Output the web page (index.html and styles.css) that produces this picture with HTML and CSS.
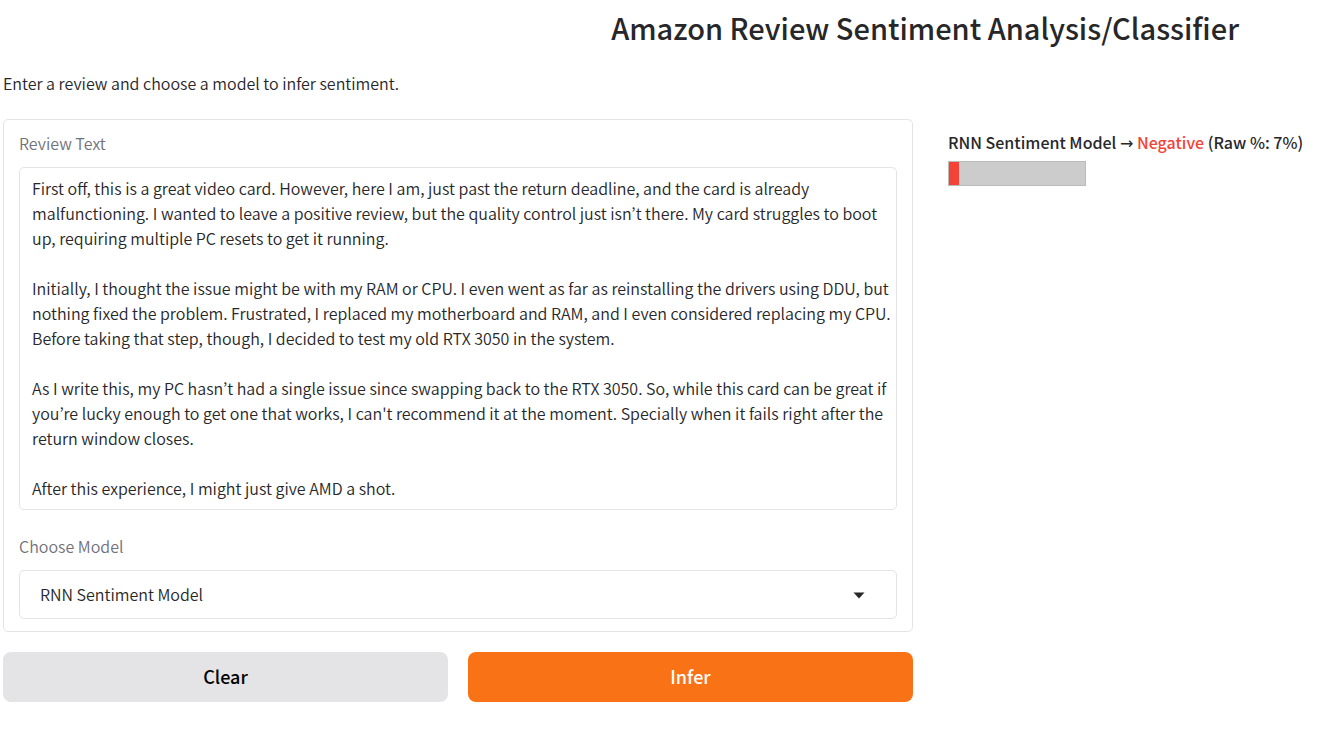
FILE: index.html
```html
<!DOCTYPE html>
<html lang="en">
<head>
<meta charset="utf-8">
<meta name="viewport" content="width=device-width, initial-scale=1">
<title>Amazon Review Sentiment Analysis/Classifier</title>
<link rel="stylesheet" href="styles.css">
</head>
<body>
<main class="app">
  <h1 class="title">Amazon Review Sentiment Analysis/Classifier</h1>
  <p class="intro">Enter a review and choose a model to infer sentiment.</p>
  <div class="columns">
    <form class="form">
      <div class="panel">
        <label class="label" for="review">Review Text</label>
        <textarea class="field review" id="review" rows="13" spellcheck="false">First off, this is a great video card. However, here I am, just past the return deadline, and the card is already malfunctioning. I wanted to leave a positive review, but the quality control just isn’t there. My card struggles to boot up, requiring multiple PC resets to get it running.

Initially, I thought the issue might be with my RAM or CPU. I even went as far as reinstalling the drivers using DDU, but nothing fixed the problem. Frustrated, I replaced my motherboard and RAM, and I even considered replacing my CPU. Before taking that step, though, I decided to test my old RTX 3050 in the system.

As I write this, my PC hasn’t had a single issue since swapping back to the RTX 3050. So, while this card can be great if you’re lucky enough to get one that works, I can't recommend it at the moment. Specially when it fails right after the return window closes.

After this experience, I might just give AMD a shot.</textarea>
        <label class="label label-model" for="model">Choose Model</label>
        <div class="select-wrap">
          <select class="field model" id="model">
            <option>RNN Sentiment Model</option>
          </select>
          <svg class="caret" viewBox="0 0 18 18" aria-hidden="true"><path d="M3.5 6.5h11L9 12.5z"/></svg>
        </div>
      </div>
      <div class="actions">
        <button class="button" type="reset">Clear</button>
        <button class="button primary" type="button">Infer</button>
      </div>
    </form>
    <section class="result" aria-live="polite">
      <p class="verdict">RNN Sentiment Model <span class="arrow">→</span> <span class="negative">Negative</span> (Raw %: 7%)</p>
      <div class="meter"><div class="meter-fill" style="width: 7%"></div></div>
    </section>
  </div>
</main>
</body>
</html>
```

FILE: styles.css
```css
* {
  box-sizing: border-box;
}

body {
  margin: 0;
  background: #fff;
  color: #27272a;
  font-family: "Noto Sans CJK KR", "Noto Sans", sans-serif;
  font-size: 16px;
  font-weight: 350;
  line-height: 24px;
}

.app {
  padding: 5px 3px 0;
}

.title {
  margin: 0;
  padding-right: 80px;
  font-size: 29px;
  font-weight: 500;
  line-height: 44px;
  text-align: right;
}

.intro {
  margin: 22px 0 24px;
}

.columns {
  display: grid;
  grid-template-columns: minmax(0, 910fr) minmax(0, 371fr);
  column-gap: 35px;
}

.panel {
  padding: 11px 15px 12px;
  border: 1px solid #e4e4e7;
  border-radius: 5px;
}

.label {
  display: block;
  margin-bottom: 12px;
  color: #71717a;
}

.label-model {
  margin-top: 24px;
}

.field {
  display: block;
  width: 100%;
  border: 1px solid #e4e4e7;
  border-radius: 5px;
  background: #fff;
  color: inherit;
  font: inherit;
}

.review {
  height: 343px;
  padding: 8px 0 8px 12px;
  line-height: 25px;
  resize: none;
  overflow: hidden;
}

.select-wrap {
  display: grid;
  align-items: center;
}

.model {
  grid-area: 1 / 1;
  height: 49px;
  padding: 0 20px 2px;
  appearance: none;
}

.caret {
  grid-area: 1 / 1;
  justify-self: end;
  width: 18px;
  height: 18px;
  margin-right: 29px;
  fill: #27272a;
  pointer-events: none;
}

.actions {
  display: grid;
  grid-template-columns: 1fr 1fr;
  gap: 20px;
  margin-top: 20px;
}

.button {
  height: 50px;
  padding: 0 0 2px;
  border: 0;
  border-radius: 8px;
  background: #e4e4e7;
  color: #000;
  font: inherit;
  font-size: 18px;
  font-weight: 500;
}

.primary {
  background: #f97316;
  color: #fff;
}

.result {
  padding-top: 11px;
}

.verdict {
  margin: 0 0 6px;
  font-weight: 500;
  line-height: 25px;
  white-space: nowrap;
}

.arrow {
  font-family: "DejaVu Sans", sans-serif;
  font-weight: 400;
  line-height: 1;
}

.negative {
  color: #f44336;
}

.meter {
  width: 138px;
  height: 25px;
  border: 1px solid #bbb;
  background: #ccc;
}

.meter-fill {
  height: 100%;
  background: #f44336;
}
```
